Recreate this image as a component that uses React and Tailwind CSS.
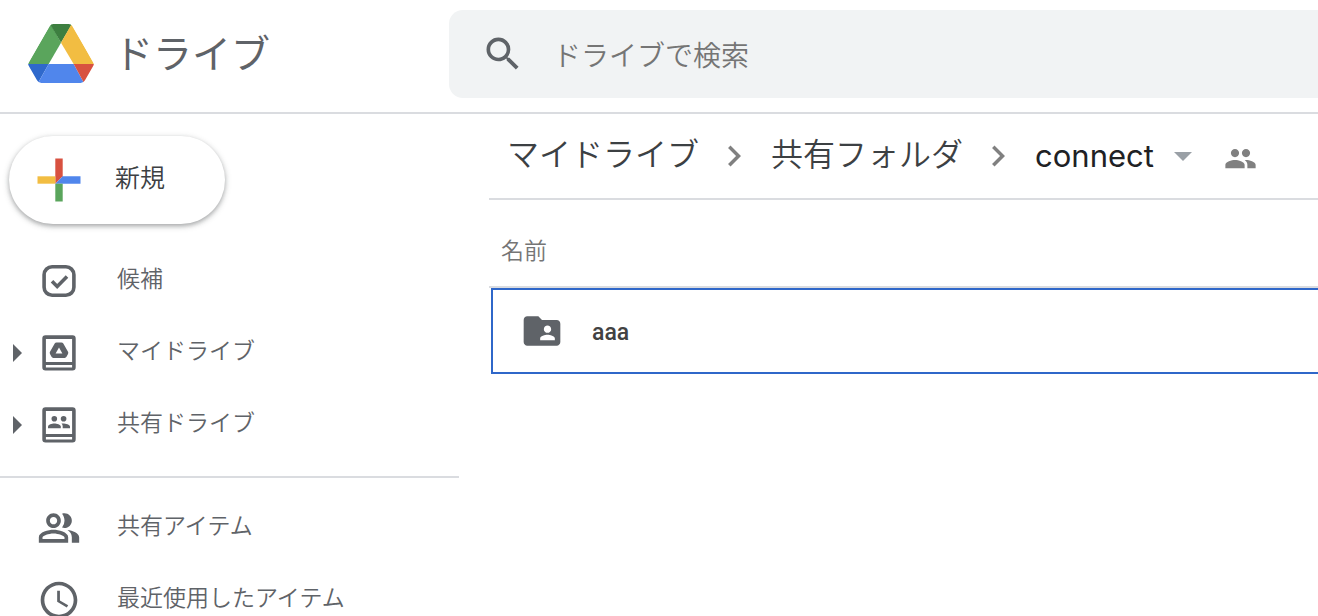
import React from 'react';
import {
  MdAccessTime,
  MdChevronRight,
  MdFolderShared,
  MdPeople,
  MdSearch,
} from 'react-icons/md';

const DriveLogo = () => (
  <svg viewBox="0 0 198 177" className="w-[66px] h-[59px] shrink-0" aria-hidden="true">
    <clipPath id="logo-shape">
      <path d="M76 0H122Q129 0 133 7L196 115Q199 120 196 125L171 169Q167 177 158 177H40Q31 177 27 169L2 125Q-1 120 2 115L65 7Q69 0 76 0Z" />
    </clipPath>
    <g clipPath="url(#logo-shape)">
      <path fill="#5aa55c" d="M68 0L0 120H62L99 56Z" />
      <path fill="#3d7f40" d="M66 0H132L99 56Z" />
      <path fill="#f2bd42" d="M131 0L198 120H137L99 56Z" />
      <path fill="#2f69cc" d="M0 120H62L30 177H0Z" />
      <path fill="#5086ec" d="M62 120H137L168 177H30Z" />
      <path fill="#d85140" d="M137 120H198V177H168Z" />
    </g>
  </svg>
);

const PlusIcon = () => (
  <svg viewBox="0 0 44 44" className="size-11 shrink-0" aria-hidden="true">
    <path fill="#d85140" d="M18.3 0.5H25.7V18.3L18.3 25.7Z" />
    <path fill="#f2bd42" d="M0.5 18.3H18.3V25.7H0.5Z" />
    <path fill="#5086ec" d="M25.7 18.3H43.5V25.7H18.3Z" />
    <path fill="#5aa55c" d="M18.3 25.7H25.7V43.5H18.3Z" />
  </svg>
);

const PriorityIcon = () => (
  <svg viewBox="0 0 44 44" className="size-11" fill="none" stroke="currentColor" strokeWidth="3.6" aria-hidden="true">
    <rect x="7.1" y="7.8" width="29.8" height="28.4" rx="8" />
    <path d="M15 22.2L20.2 27.4L30 17.6" />
  </svg>
);

const DrawerFrame = ({ children }) => (
  <svg viewBox="0 0 44 44" className="size-11" fill="currentColor" aria-hidden="true">
    <path
      fillRule="evenodd"
      d="M8.5 4.3H35.5Q38.7 4.3 38.7 7.5V36.2Q38.7 39.4 35.5 39.4H8.5Q5.3 39.4 5.3 36.2V7.5Q5.3 4.3 8.5 4.3ZM8.9 7.9V31H35.1V7.9ZM8.9 34V36.4H35.1V34Z"
    />
    {children}
  </svg>
);

const MyDriveIcon = () => (
  <DrawerFrame>
    <path
      fillRule="evenodd"
      d="M19.5 11.4H24.5Q25.7 11.4 26.3 12.5L31 20.8Q31.6 21.9 31 23L29.5 25.8Q28.9 26.9 27.7 26.9H16.3Q15.1 26.9 14.5 25.8L13 23Q12.4 21.9 13 20.8L17.7 12.5Q18.3 11.4 19.5 11.4ZM22 16.6L18.6 22.6H25.4Z"
    />
  </DrawerFrame>
);

const SharedDriveIcon = () => (
  <DrawerFrame>
    <circle cx="17.3" cy="15.8" r="2.8" />
    <circle cx="26.6" cy="15.8" r="2.8" />
    <path d="M11 25.2V23.6C11 21.5 14.9 20.4 17.3 20.4S23.8 21.5 23.8 23.6V25.2Z" />
    <path d="M25.7 25.2V23.6C25.7 22.3 25.2 21.3 24.4 20.6C27 20.1 33 21.2 33 23.6V25.2Z" />
  </DrawerFrame>
);

const SharedIcon = () => (
  <svg viewBox="0 0 24 24" className="size-11" fill="currentColor" aria-hidden="true">
    <path d="M15 8c0-1.42-.5-2.73-1.33-3.76.42-.14.86-.24 1.33-.24 2.21 0 4 1.79 4 4s-1.79 4-4 4c-.43 0-.84-.09-1.33-.24A5.98 5.98 0 0 0 15 8zM16.66 13.13C18.03 14.06 19 15.32 19 17v3h4v-3c0-2.18-3.58-3.47-6.34-3.87zM9 6c-1.1 0-2 .9-2 2s.9 2 2 2 2-.9 2-2-.9-2-2-2zM9 15c-2.7 0-5.8 1.29-6 2.01V18h12v-1c-.2-.71-3.3-2-6-2zM9 4c2.21 0 4 1.79 4 4s-1.79 4-4 4-4-1.79-4-4 1.79-4 4-4zM9 13c2.67 0 8 1.34 8 4v3H1v-3c0-2.66 5.33-4 8-4z" fillRule="evenodd" />
  </svg>
);

const mainItems = [
  { label: '候補', icon: <PriorityIcon /> },
  { label: 'マイドライブ', icon: <MyDriveIcon />, expandable: true },
  { label: '共有ドライブ', icon: <SharedDriveIcon />, expandable: true },
];

const otherItems = [
  { label: '共有アイテム', icon: <SharedIcon /> },
  { label: '最近使用したアイテム', icon: <MdAccessTime className="size-11" /> },
];

const NavItem = ({ item }) => (
  <li>
    <a href="#" className="flex items-center h-[72px] pl-3 text-[#5f6368]">
      <span className="w-[25px] shrink-0">
        {item.expandable && (
          <svg viewBox="0 0 10 18" className="w-[10px] h-[18px]" fill="currentColor" aria-hidden="true">
            <path d="M1 0L10 9L1 18Z" />
          </svg>
        )}
      </span>
      <span className="shrink-0">{item.icon}</span>
      <span className="pl-9 pb-2 text-[23px] leading-8 whitespace-nowrap">{item.label}</span>
    </a>
  </li>
);

const Sidebar = () => (
  <nav className="w-[459px] shrink-0">
    <button
      type="button"
      className="flex items-center w-[216px] h-[88px] mt-[22px] ml-[9px] pl-7 rounded-full bg-white text-[#3c4043] shadow-[0_2px_4px_rgba(60,64,67,0.35),0_2px_6px_1px_rgba(60,64,67,0.15)]"
    >
      <PlusIcon />
      <span className="pl-[34px] pb-2 text-[25px] leading-8">新規</span>
    </button>
    <ul className="mt-[21px] pb-[15px] border-b-2 border-[#dadce0]">
      {mainItems.map(item => (
        <NavItem key={item.label} item={item} />
      ))}
    </ul>
    <ul className="pt-[14px]">
      {otherItems.map(item => (
        <NavItem key={item.label} item={item} />
      ))}
    </ul>
  </nav>
);

const Breadcrumbs = () => (
  <div className="flex items-center h-[86px] pl-[18px] border-b-2 border-[#dadce0] text-[32px] leading-10 text-[#3c4043] whitespace-nowrap">
    <a href="#" className="pb-2">マイドライブ</a>
    <MdChevronRight className="size-[42px] ml-[14px] mr-4 shrink-0 text-[#808080]" />
    <a href="#" className="pb-2">共有フォルダ</a>
    <MdChevronRight className="size-[42px] ml-[14px] mr-4 shrink-0 text-[#808080]" />
    <button type="button" className="flex items-center text-[#202124]">
      <span className="font-[Inter] font-normal text-[31px] leading-10">connect</span>
      <svg viewBox="0 0 18 9" className="w-[18px] h-[9px] ml-5" fill="#9aa0a6" aria-hidden="true">
        <path d="M0 0H18L9 9Z" />
      </svg>
    </button>
    <button type="button" aria-label="共有" className="pt-1 ml-8 text-[#808080]">
      <MdPeople className="size-[33px]" />
    </button>
  </div>
);

const FileList = () => (
  <table className="w-full border-separate border-spacing-0">
    <thead>
      <tr>
        <th className="h-[88px] p-0 pt-3 pl-3 border-b-2 border-[#dadce0] text-left text-[23px] leading-8 font-[350] text-[#757575]">
          名前
        </th>
      </tr>
    </thead>
    <tbody>
      <tr>
        <td className="p-0 pl-[2px]">
          <div className="flex items-center h-[86px] pl-[27px] border-2 border-r-0 border-[#2f67c9]">
            <MdFolderShared className="size-11 text-[#5f6368]" />
            <span className="pl-7 pt-1 font-[Roboto] font-medium text-[23px] leading-8 text-[#424242]">aaa</span>
          </div>
        </td>
      </tr>
    </tbody>
  </table>
);

const App = () => {
  return (
    <div className="h-screen overflow-hidden flex flex-col bg-white font-['Noto_Sans_CJK_JP',sans-serif] font-[350]">
      <header className="flex items-center shrink-0 h-[114px] pb-1 border-b-2 border-[#dadce0]">
        <a href="#" className="flex items-center w-[449px] shrink-0 pl-7 pb-[2px] text-[#5f6368]">
          <DriveLogo />
          <span className="pl-5 pb-1 text-[39px] leading-[48px] font-normal">ドライブ</span>
        </a>
        <label className="flex items-center flex-1 min-w-0 h-[88px] pl-8 rounded-l-[14px] bg-[#f1f3f4]">
          <MdSearch className="size-11 shrink-0 text-[#5f6368]" aria-hidden="true" />
          <input
            type="text"
            aria-label="ドライブで検索"
            placeholder="ドライブで検索"
            className="flex-1 min-w-0 pl-7 bg-transparent outline-none text-[28px] leading-10 text-[#202124] placeholder:text-[#757575]"
          />
        </label>
      </header>
      <div className="flex flex-1 min-h-0">
        <Sidebar />
        <main className="flex-1 min-w-0 pl-[30px]">
          <Breadcrumbs />
          <FileList />
        </main>
      </div>
    </div>
  );
};

export default App;
